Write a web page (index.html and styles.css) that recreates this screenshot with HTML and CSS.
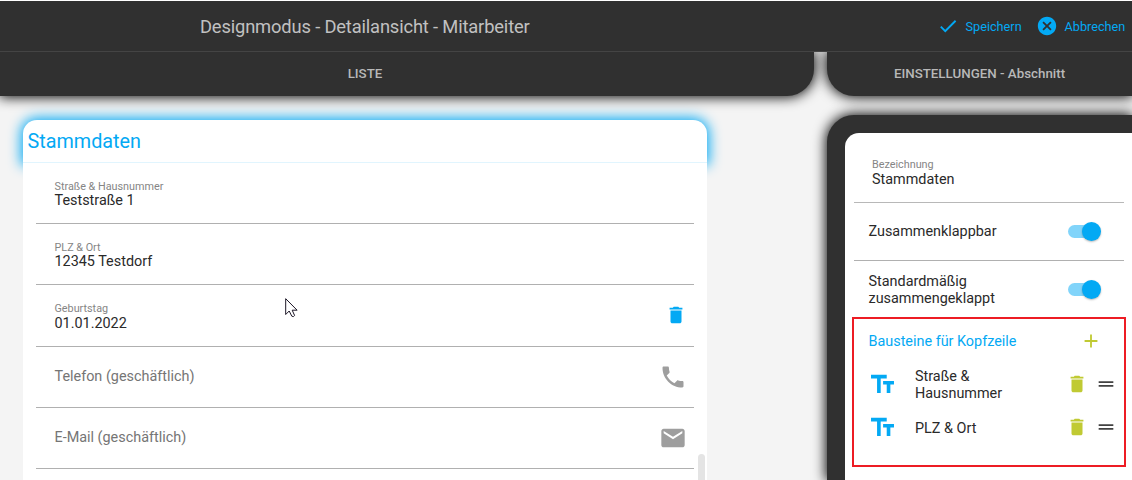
FILE: index.html
```html
<!DOCTYPE html>
<html lang="de">
<head>
<meta charset="utf-8">
<title>Designmodus</title>
<link rel="stylesheet" href="styles.css">
</head>
<body>
<svg class="defs" width="0" height="0">
  <symbol id="check" viewBox="0 0 24 24"><path d="M9 16.17L4.83 12l-1.42 1.41L9 19 21 7l-1.41-1.41z"/></symbol>
  <symbol id="cancel" viewBox="0 0 24 24"><path d="M12 2C6.47 2 2 6.47 2 12s4.47 10 10 10 10-4.47 10-10S17.53 2 12 2zm5 13.59L15.59 17 12 13.41 8.41 17 7 15.59 10.59 12 7 8.41 8.41 7 12 10.59 15.59 7 17 8.41 13.41 12 17 15.59z"/></symbol>
  <symbol id="trash" viewBox="0 0 24 24"><path d="M6 19c0 1.1.9 2 2 2h8c1.1 0 2-.9 2-2V7H6v12zM19 4h-3.5l-1-1h-5l-1 1H5v2h14V4z"/></symbol>
  <symbol id="phone" viewBox="0 0 24 24"><path d="M6.62 10.79c1.44 2.83 3.76 5.14 6.59 6.59l2.2-2.2c.27-.27.67-.36 1.02-.24 1.12.37 2.33.57 3.57.57.55 0 1 .45 1 1V20c0 .55-.45 1-1 1-9.39 0-17-7.61-17-17 0-.55.45-1 1-1h3.5c.55 0 1 .45 1 1 0 1.25.2 2.45.57 3.57.11.35.03.74-.25 1.02l-2.2 2.2z"/></symbol>
  <symbol id="mail" viewBox="0 0 24 24"><path d="M20 4H4c-1.1 0-1.99.9-1.99 2L2 18c0 1.1.9 2 2 2h16c1.1 0 2-.9 2-2V6c0-1.1-.9-2-2-2zm0 4l-8 5-8-5V6l8 5 8-5v2z"/></symbol>
  <symbol id="text" viewBox="0 0 24 24"><path d="M2.5 4v3h5v12h3V7h5V4h-13zm19 5h-9v3h3v7h3v-7h3V9z"/></symbol>
  <symbol id="add" viewBox="0 0 24 24"><path d="M19 13h-6v6h-2v-6H5v-2h6V5h2v6h6z"/></symbol>
  <symbol id="drag" viewBox="0 0 24 24"><path d="M20 9H4v2h16V9zM4 15h16v-2H4v2z"/></symbol>
</svg>
<header class="topbar">
  <h1 class="title">Designmodus - Detailansicht - Mitarbeiter</h1>
  <div class="action save"><svg class="i22"><use href="#check"/></svg><span>Speichern</span></div>
  <div class="action cancel"><svg class="i22"><use href="#cancel"/></svg><span>Abbrechen</span></div>
</header>
<nav class="tabs">
  <div class="tab tab-list"><span>LISTE</span></div>
  <div class="tab tab-settings"><span>EINSTELLUNGEN - Abschnitt</span></div>
</nav>
<main class="main">
  <section class="card">
    <h2 class="card-head"><span>Stammdaten</span></h2>
    <div class="rows">
      <div class="row"><div class="field"><small>Straße &amp; Hausnummer</small><b>Teststraße 1</b></div></div>
      <div class="row"><div class="field"><small>PLZ &amp; Ort</small><b>12345 Testdorf</b></div></div>
      <div class="row date"><div class="field"><small>Geburtstag</small><b>01.01.2022</b></div><svg class="i22 blue"><use href="#trash"/></svg></div>
      <div class="row"><span class="empty">Telefon (geschäftlich)</span><svg class="i28 gray"><use href="#phone"/></svg></div>
      <div class="row"><span class="empty">E-Mail (geschäftlich)</span><svg class="i28 gray"><use href="#mail"/></svg></div>
    </div>
    <i class="scrollbar"></i>
  </section>
  <aside class="panel">
    <div class="panel-body">
      <div class="name"><small>Bezeichnung</small><b>Stammdaten</b></div>
      <div class="option first"><span>Zusammenklappbar</span><i class="switch"></i></div>
      <div class="option"><span>Standardmäßig<br>zusammengeklappt</span><i class="switch"></i></div>
      <div class="blocks">
        <div class="blocks-head"><span>Bausteine für Kopfzeile</span><svg class="i22"><use href="#add"/></svg></div>
        <div class="block"><svg class="i29 blue"><use href="#text"/></svg><span>Straße &amp;<br>Hausnummer</span><svg class="i22 lime"><use href="#trash"/></svg><svg class="i22 handle"><use href="#drag"/></svg></div>
        <div class="block single"><svg class="i29 blue"><use href="#text"/></svg><span>PLZ &amp; Ort</span><svg class="i22 lime"><use href="#trash"/></svg><svg class="i22 handle"><use href="#drag"/></svg></div>
      </div>
    </div>
  </aside>
</main>
<svg class="cursor" viewBox="0 0 13 20"><path d="M.7.7V16.5L4.2 13l2.6 5.2 1.6.4 1.2-1.1L7.2 12.2h4.9z"/></svg>
</body>
</html>
```
FILE: styles.css
```css
* { box-sizing: border-box; }
body {
  margin: 0;
  width: 1132px;
  height: 480px;
  overflow: hidden;
  padding-top: 1px;
  background: linear-gradient(#fff 1px, #f4f4f4 1px);
  font: 14.4px/17px Roboto, sans-serif;
  color: #2a2a2a;
}
.defs { position: absolute; }
svg { fill: currentColor; flex: none; display: block; }
h1, h2 { margin: 0; font-weight: 400; }
b { font-weight: 400; }
small { font-size: 10.8px; line-height: 13px; color: #858585; }
.i22 { width: 22px; height: 22px; }
.i28 { width: 28px; height: 28px; }
.i29 { width: 29px; height: 29px; }
.blue { color: #03a9f4; }
.gray { color: #9e9e9e; }
.lime { color: #c0ca33; }

.topbar {
  position: relative;
  z-index: 2;
  height: 51px;
  display: flex;
  align-items: center;
  background: #303030;
  border-bottom: 1px solid #444;
  color: #03a9f4;
}
.title {
  width: 936.5px;
  padding-left: 200px;
  font-size: 18.33px;
  letter-spacing: -.16px;
  color: #c1c1c1;
  white-space: nowrap;
}
.action { display: flex; align-items: center; gap: 7px; font-size: 12.7px; white-space: nowrap; }
.save { width: 99px; }
.tabs { display: flex; gap: 13px; height: 44px; }
.tab {
  display: flex;
  align-items: center;
  justify-content: center;
  height: 44px;
  padding-bottom: 2px;
  background: #303030;
  color: #b8b8b8;
  font-size: 13.33px;
  font-weight: 500;
  box-shadow: 0 0 13px 1px #000;
}
.tab-list { width: 814px; padding-right: 84px; border-radius: 0 0 27px 0; }
.tab-settings { width: 305px; border-radius: 0 0 0 27px; }

.main { display: flex; height: 384px; padding-left: 23px; }
.card { width: 684px; margin-top: 24px; position: relative; }
.card-head {
  height: 43px;
  padding: 13px 0 0 4.5px;
  font-size: 19.8px;
  line-height: 18px;
  color: #03a9f4;
  background: #fff;
  border-bottom: 1px solid #e1f5fe;
  border-radius: 14px 14px 0 0;
  box-shadow: 0 0 13px 2px #03a9f4;
}
.rows { position: relative; background: #fff; height: 317px; padding: 0 13px; }
.row {
  display: flex;
  align-items: center;
  justify-content: space-between;
  height: 61.2px;
  padding: 0 7.5px 0 18.5px;
  border-bottom: 1px solid #b0b0b0;
}
.field { display: flex; flex-direction: column; padding-top: 3px; }
.field b { margin-top: -1px; }
.date .field b { margin-top: 0; }
.empty { color: #757575; }
.scrollbar {
  position: absolute;
  right: 2px;
  top: 334px;
  width: 7px;
  height: 26px;
  border-radius: 4px 4px 0 0;
  background: #e4e4e4;
}

.panel {
  width: 305px;
  margin: 18.5px 0 0 120px;
  padding: 18px 0 0 18px;
  background: #303030;
  border-radius: 27px 0 0 0;
  box-shadow: 0 0 13px 1px #000;
}
.panel-body { height: 347.5px; padding: 0 6px 0 7px; background: #fff; border-radius: 14px 0 0 0; }
.name {
  height: 70px;
  margin: 0 2px;
  padding: 25px 0 0 18px;
  display: flex;
  flex-direction: column;
  border-bottom: 1px solid #b8b8b8;
}
.option { display: flex; align-items: center; justify-content: space-between; height: 56px; margin: 0 2px; padding: 2px 23px 0 14.5px; }
.option.first { height: 58px; padding-top: 0; border-bottom: 1px solid #b0b0b0; }
.switch { display: flex; align-items: center; justify-content: flex-end; width: 33px; height: 19px; }
.switch::before { content: ""; width: 27px; height: 13px; margin-right: -13px; border-radius: 7px; background: #81d4fa; }
.switch::after { content: ""; position: relative; width: 19px; height: 19px; border-radius: 50%; background: #03a9f4; box-shadow: 0 1px 2px #0004; }
.blocks { height: 150px; border: 2px solid #ed1c24; padding: 12px 0 0 14.5px; }
.blocks-head { display: flex; align-items: center; justify-content: space-between; height: 22px; padding-right: 22px; color: #03a9f4; }
.blocks-head svg { color: #c0ca33; margin-top: -1px; }
.block { display: grid; grid-template-columns: 46.5px 151px 29px 22px; align-items: center; height: 43px; }
.block .i22 { margin-top: -2px; }
.block .i29 { margin: -1px 0 0 -1px; }
.block:nth-child(2) { margin-top: 11px; }
.single span { padding-top: 1px; }
.handle { color: #424242; }
.cursor { position: absolute; left: 285px; top: 298px; width: 13px; height: 20px; fill: #fff; stroke: #1c1626; stroke-width: 1; }
```
